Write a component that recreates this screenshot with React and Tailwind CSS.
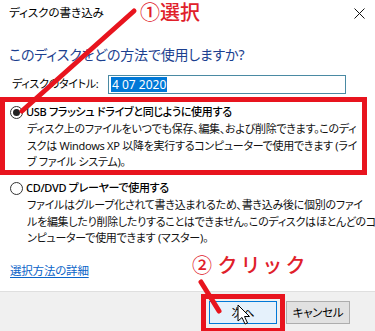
import React from "react";

const ui = "font-['Noto_Sans','Noto_Sans_CJK_JP',sans-serif] [font-feature-settings:'palt']";

function Radio({ checked }) {
  return (
    <span className="w-[13px] h-[13px] rounded-full border border-[#333] bg-white flex items-center justify-center shrink-0">
      {checked && <span className="w-[7px] h-[7px] rounded-full bg-[#222]" />}
    </span>
  );
}

function Option({ checked, title, lines }) {
  return (
    <div className="flex flex-col">
      <div className="flex items-center h-[16px] pl-[10px]">
        <Radio checked={checked} />
        <span className="ml-[3px] text-[11px] tracking-[-0.3px] font-medium text-black whitespace-nowrap">{title}</span>
      </div>
      <div className="pl-[27px] mt-[1px] text-[11px] tracking-[-0.28px] leading-[16.5px] text-[#111] whitespace-nowrap">
        {lines.map((l) => (
          <div key={l}>{l}</div>
        ))}
      </div>
    </div>
  );
}

export default function App() {
  return (
    <div className={`relative w-[375px] h-[331px] bg-white overflow-hidden flex flex-col ${ui}`}>
      {/* title bar */}
      <div className="h-[26px] flex items-center justify-between pl-[9px] pr-[10px]">
        <span className="text-[11.5px] text-black">ディスクの書き込み</span>
        <svg width="11" height="11" viewBox="0 0 11 11">
          <path d="M0.5 0.5 L10.5 10.5 M10.5 0.5 L0.5 10.5" stroke="#111" strokeWidth="1" />
        </svg>
      </div>

      <div className="flex-1 flex flex-col">
        <div className="mt-[18px] pl-[9px] text-[14px] tracking-[-0.2px] leading-[22px] text-[#1c3f8f] whitespace-nowrap">
          このディスクをどの方法で使用しますか?
        </div>

        <div className="mt-[9px] flex items-center pl-[12px] h-[19px]">
          <span className="w-[96px] text-[11px] tracking-[-0.3px] text-black whitespace-nowrap">ディスクのタイトル:</span>
          <div className="w-[238px] h-[19px] border border-[#4a8aa3] flex items-center pl-[2px]">
            <span className="bg-[#0078d7] text-white text-[12px] leading-[15px] px-[1px]">4 07 2020</span>
          </div>
        </div>

        <div className="mt-[3px] w-[367px] h-[78px] border-[5px] border-[#e8141e] pt-[2px]">
          <div className="-ml-[5px]">
            <Option
              checked
              title="USB フラッシュ ドライブと同じように使用する"
              lines={[
                "ディスク上のファイルをいつでも保存、編集、および削除できます。このディ",
                "スクは Windows XP 以降を実行するコンピューターで使用できます (ライ",
                "ブ ファイル システム)。",
              ]}
            />
          </div>
        </div>

        <div className="mt-[5px]">
          <Option
            title="CD/DVD プレーヤーで使用する"
            lines={[
              "ファイルはグループ化されて書き込まれるため、書き込み後に個別のファイ",
              "ルを編集したり削除したりすることはできません。このディスクはほとんどのコ",
              "ンピューターで使用できます (マスター)。",
            ]}
          />
        </div>

        <div className="mt-[10px] pl-[10px]">
          <span className="text-[11.5px] tracking-[-0.2px] text-[#0a64c8] underline underline-offset-2">選択方法の詳細</span>
        </div>
      </div>

      {/* footer */}
      <div className="h-[40px] bg-[#f0f0f0] border-t border-[#dfdfdf] flex items-start justify-end pr-[25px] pt-[2px]">
        <div className="border-[5px] border-[#e8141e] px-[3px] pt-[2px] pb-[4px]">
          <div className="w-[68px] h-[23px] bg-[#e5f1fb] border border-[#0078d7] flex items-center justify-center text-[11.5px] text-black">
            次へ
          </div>
        </div>
        <div className="mt-[7px] ml-[1px] w-[64px] h-[23px] bg-[#e1e1e1] border border-[#adadad] flex items-center justify-center text-[11.5px] tracking-[-0.3px] text-black">
          キャンセル
        </div>
      </div>

      {/* annotations */}
      <svg className="absolute inset-0 pointer-events-none" width="375" height="331">
        <line x1="134" y1="11" x2="22" y2="111" stroke="#e8141e" strokeWidth="5" strokeLinecap="round" />
        <line x1="201" y1="282" x2="219" y2="311" stroke="#e8141e" strokeWidth="5" strokeLinecap="round" />
        <path
          d="M238 305 L238 321 L242 317.5 L245 324 L247.5 323 L244.5 316.5 L249.5 316.5 Z"
          fill="#fff"
          stroke="#000"
          strokeWidth="1"
          strokeLinejoin="round"
        />
      </svg>
      <div className="absolute left-[140px] top-[0px] text-[20px] leading-[26px] text-[#e0202a] font-medium whitespace-nowrap">
        ①選択
      </div>
      <div className="absolute left-[192px] top-[253px] text-[20px] leading-[26px] text-[#e0202a] font-medium tracking-[6px] whitespace-nowrap">
        ②クリック
      </div>
    </div>
  );
}
